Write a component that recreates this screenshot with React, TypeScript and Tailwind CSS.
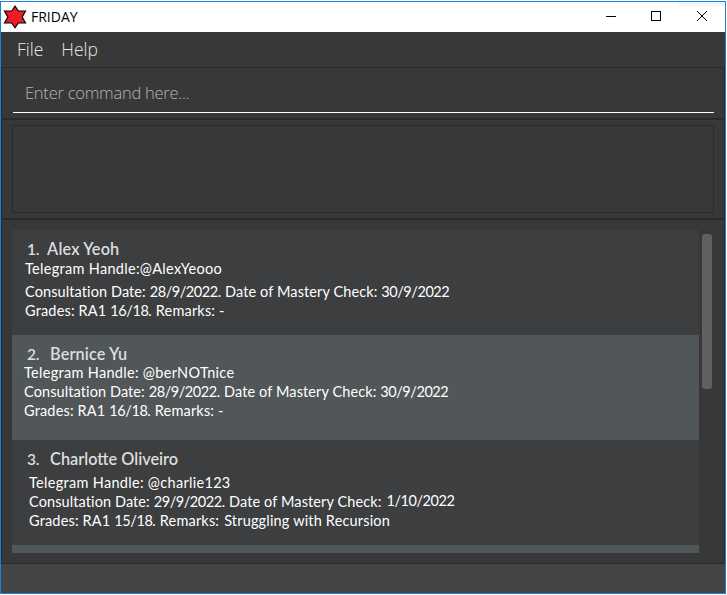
import React from "react";

type Line = { text: string; className: string; tail?: string; tailClass?: string };

type Person = {
  id: number;
  name: string;
  heading: string;
  body: string;
  lines: Line[];
};

const people: Person[] = [
  {
    id: 1,
    name: "Alex Yeoh",
    heading: "gap-[8px] tracking-[0.15px]",
    body: "pl-[13px]",
    lines: [
      { text: "Telegram Handle:@AlexYeooo", className: "-mt-px tracking-[0.3px]" },
      { text: "Consultation Date: 28/9/2022. Date of Mastery Check: 30/9/2022", className: "mt-1 tracking-[0.1px]" },
      { text: "Grades: RA1 16/18. Remarks: -", className: "tracking-[0.17px]" },
    ],
  },
  {
    id: 2,
    name: "Bernice Yu",
    heading: "gap-[11px] tracking-[0.1px]",
    body: "pl-[12px]",
    lines: [
      { text: "Telegram Handle: @berNOTnice", className: "-mt-0.5 tracking-[0.3px]" },
      { text: "Consultation Date: 28/9/2022. Date of Mastery Check: 30/9/2022", className: "tracking-[0.1px]" },
      { text: "Grades: RA1 16/18. Remarks: -", className: "tracking-[0.17px]" },
    ],
  },
  {
    id: 3,
    name: "Charlotte Oliveiro",
    heading: "gap-[11px]",
    body: "pl-[17px]",
    lines: [
      { text: "Telegram Handle: @charlie123", className: "mt-[3px] tracking-[0.3px]" },
      {
        text: "Consultation Date: 29/9/2022. Date of Mastery Check:",
        className: "tracking-[0.1px]",
        tail: "1/10/2022",
        tailClass: "ml-[5px] -mt-px",
      },
      {
        text: "Grades: RA1 15/18. Remarks:",
        className: "tracking-[0.17px]",
        tail: "Struggling with Recursion",
        tailClass: "ml-[5px] tracking-[0.17px]",
      },
    ],
  },
];

/** Sets the dates in a line slightly tighter than the words round them. */
function DatedText({ text }: { text: string }) {
  return (
    <>
      {text.split(/(\d+\/\d+\/\d+|\d+\/\d+)/).map((part, i) =>
        i % 2 ? (
          <span key={i} className="tracking-[-0.43px]">
            {part}
          </span>
        ) : (
          part
        ),
      )}
    </>
  );
}

function PersonCard({ person }: { person: Person }) {
  return (
    <div className={`h-[105px] shrink-0 overflow-hidden ${person.id % 2 ? "bg-[#3c3e3f]" : "bg-[#515658]"}`}>
      <div
        className={`flex h-[30px] items-baseline pl-[15px] pt-[8px] font-[Lato,sans-serif] text-[16.3px] leading-[22px] font-semibold text-[#dddddd] ${person.heading}`}
      >
        <span className="text-[15.5px] tracking-[-0.3px]">{person.id}.</span>
        <span>{person.name}</span>
      </div>
      <div
        className={`font-[Lato,sans-serif] text-[14.5px] leading-[19px] text-white [font-variant-ligatures:none] ${person.body}`}
      >
        {person.lines.map((line) => (
          <div key={line.text} className={`flex h-[19px] whitespace-pre ${line.className}`}>
            <span>
              <DatedText text={line.text} />
            </span>
            {line.tail && (
              <span className={line.tailClass}>
                <DatedText text={line.tail} />
              </span>
            )}
          </div>
        ))}
      </div>
    </div>
  );
}

function TitleBar() {
  return (
    <header className="flex h-[30px] shrink-0 items-center bg-white">
      <svg className="ml-[2px] h-6 w-6 shrink-0" viewBox="0 0 24 24">
        <path
          d="M12 1.2 L15.3 6 H22.5 L19.2 12 L22.5 18 H15.3 L12 22.8 L8.7 18 H1.5 L4.8 12 L1.5 6 H8.7 Z"
          fill="#ed1c24"
          stroke="#000"
          strokeWidth="1.2"
        />
      </svg>
      <span className="ml-[4px] font-['Open_Sans',sans-serif] text-[14px] leading-4 text-black">FRIDAY</span>
      <svg className="ml-auto h-[30px] w-[138px] shrink-0" viewBox="0 0 138 30" fill="none" stroke="#000">
        <path d="M19 14.5H29" />
        <rect x="64.5" y="9.5" width="9" height="9" />
        <path d="M110 9L120 19M120 9L110 19" />
        <path d="M92 2H138" stroke="#f0f8ff" strokeWidth="4" />
      </svg>
    </header>
  );
}

export default function App() {
  return (
    <div className="h-[595px] w-[727px] overflow-hidden bg-white pr-px pt-px pb-px">
      <div className="flex h-[593px] w-[726px] flex-col border border-[#1883d7] bg-[#383838]">
        <TitleBar />
        <nav className="flex h-[35px] shrink-0 gap-[18px] pl-4 pt-[5px] font-['Open_Sans',sans-serif] text-[17.5px] leading-6 font-light text-[#e6e6e6]">
          <span>File</span>
          <span>Help</span>
        </nav>
        <main className="flex h-[497px] shrink-0 flex-col border border-[#2b2b2b]">
          <div className="h-[50px] shrink-0 pl-[11px] pr-[10px]">
            <div className="h-[45px] border-b border-white pl-3 pt-[13px] font-['Open_Sans',sans-serif] text-[16.5px] leading-6 font-light tracking-[-0.24px] text-[#b4b4b4]">
              Enter command here...
            </div>
          </div>
          <div className="h-0.5 shrink-0 bg-[#2b2b2b]" />
          <div className="h-[98px] shrink-0 pl-[10px] pr-[10px] pt-[5px]">
            <div className="h-[88px] border border-[#2b2b2b]" />
          </div>
          <div className="h-0.5 shrink-0 bg-[#2b2b2b]" />
          <div className="flex h-[333px] shrink-0 pl-[10px] pt-[10px]">
            <div className="flex h-[323px] w-[687px] flex-col overflow-hidden">
              {people.map((p) => (
                <PersonCard key={p.id} person={p} />
              ))}
              <div className="h-2 shrink-0 bg-[#515658]" />
            </div>
            <div className="ml-[3px] mt-1 h-[155px] w-[10px] rounded-[3px] bg-[#606060]" />
          </div>
        </main>
        <footer className="flex-1 bg-[#444444]" />
      </div>
    </div>
  );
}
